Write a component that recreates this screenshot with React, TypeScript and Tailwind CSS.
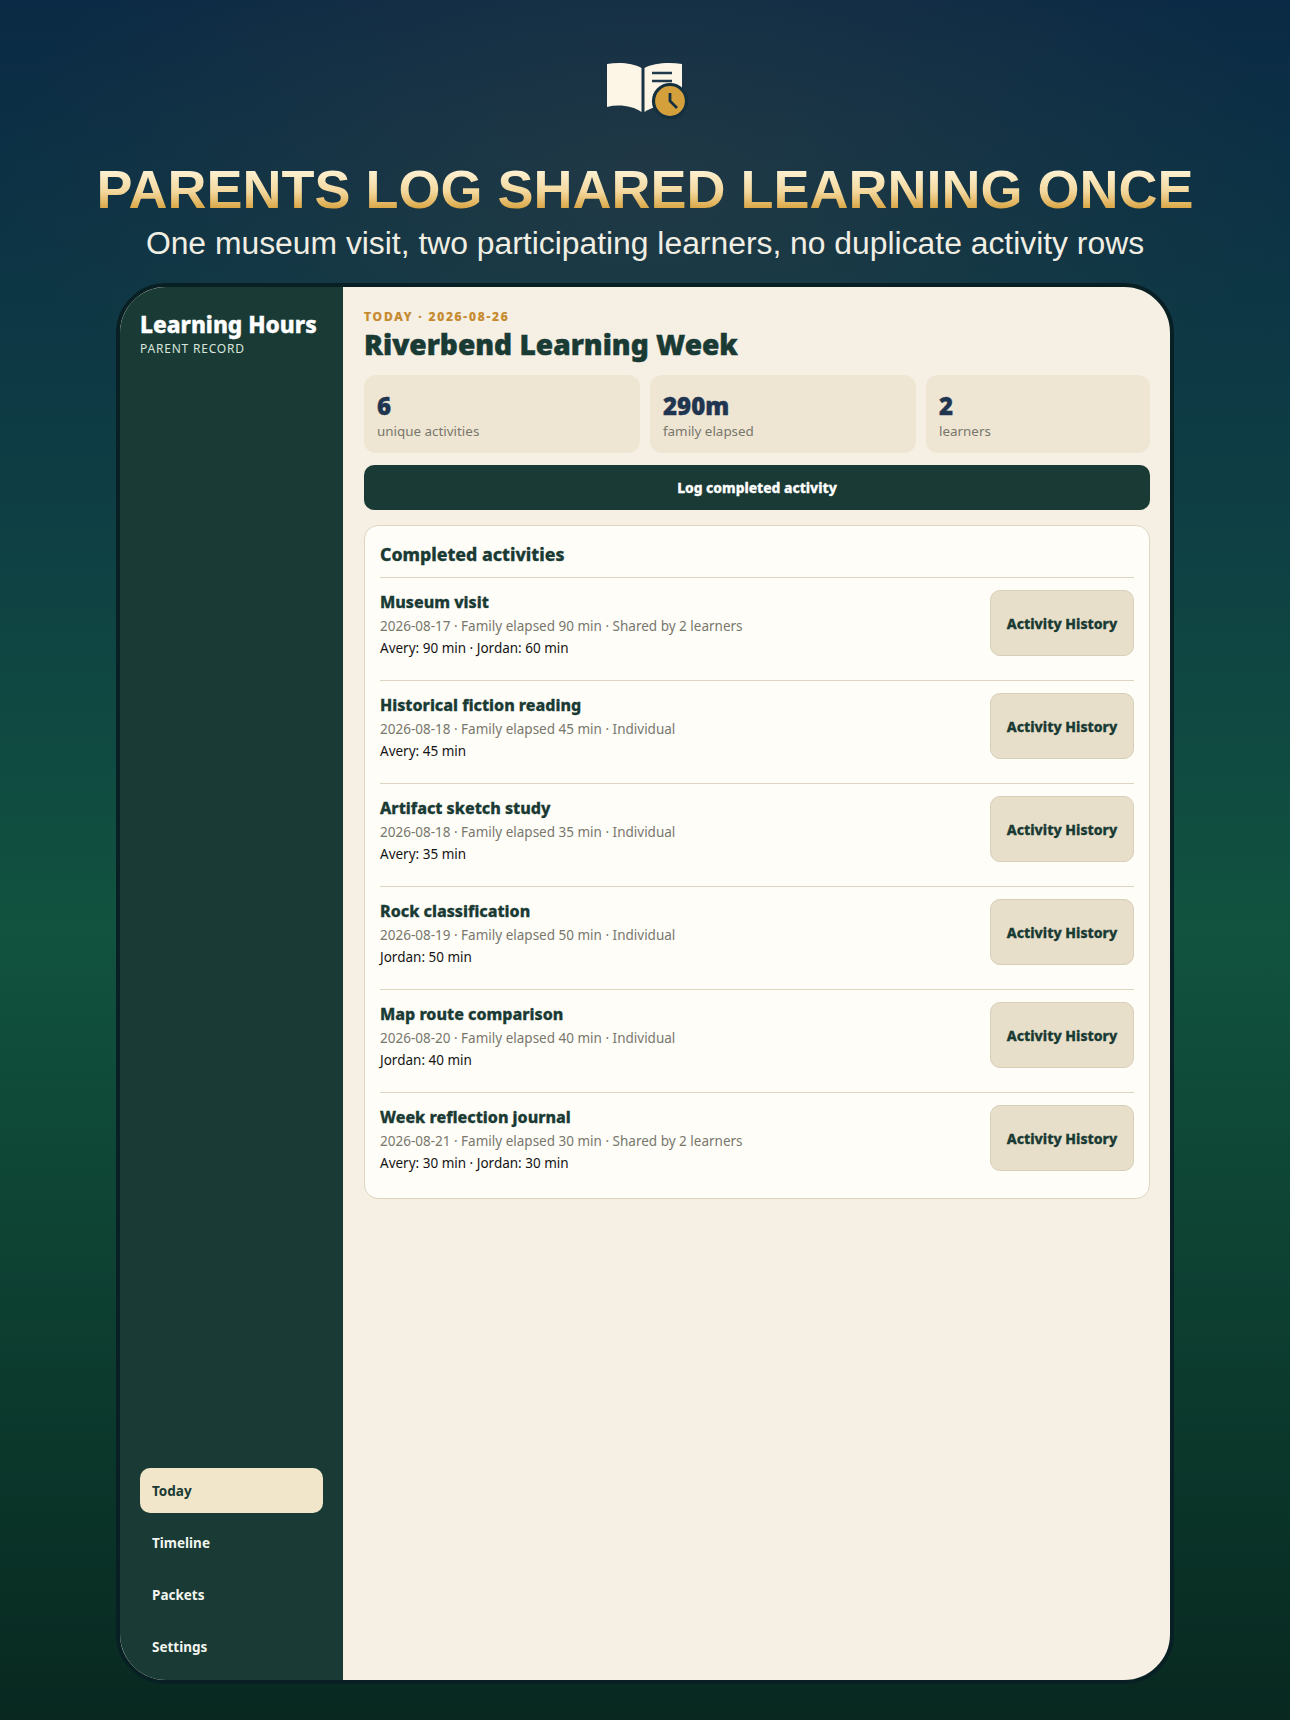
import React from 'react';

const activities = [
  { name: 'Museum visit', meta: '2026-08-17 · Family elapsed 90 min · Shared by 2 learners', who: 'Avery: 90 min · Jordan: 60 min' },
  { name: 'Historical fiction reading', meta: '2026-08-18 · Family elapsed 45 min · Individual', who: 'Avery: 45 min' },
  { name: 'Artifact sketch study', meta: '2026-08-18 · Family elapsed 35 min · Individual', who: 'Avery: 35 min' },
  { name: 'Rock classification', meta: '2026-08-19 · Family elapsed 50 min · Individual', who: 'Jordan: 50 min' },
  { name: 'Map route comparison', meta: '2026-08-20 · Family elapsed 40 min · Individual', who: 'Jordan: 40 min' },
  { name: 'Week reflection journal', meta: '2026-08-21 · Family elapsed 30 min · Shared by 2 learners', who: 'Avery: 30 min · Jordan: 30 min' },
];

const stats = [
  { value: '6', label: 'unique activities' },
  { value: '290m', label: 'family elapsed' },
  { value: '2', label: 'learners' },
];

const navItems = ['Timeline', 'Packets', 'Settings'];

const BookIcon = () => (
  <svg width="85" height="62" viewBox="0 0 85 62" className="block">
    <path d="M2 4 C14 2 28 3 36.5 8 V52 C28 46 14 44 2 47 Z" fill="#fdf5e6" />
    <path d="M39.5 8 C48 3 64 2 77 4 V47 C64 44 48 46 39.5 52 Z" fill="#fdf5e6" />
    <path d="M47 13 H67 M47 21 H67" stroke="#1f3a4a" strokeWidth="2.6" fill="none" />
    <circle cx="65" cy="41" r="16.5" fill="#d4a03c" stroke="#14303f" strokeWidth="3.2" />
    <path d="M65 33 V41 L72 48" stroke="#14303f" strokeWidth="2.8" fill="none" />
  </svg>
);

export default function App() {
  return (
    <div className="relative min-h-[1720px] w-[1290px] overflow-hidden bg-[linear-gradient(180deg,#0b2a45_0%,#0e3f44_30%,#11533f_54%,#0d3f31_76%,#082820_100%)] font-['Noto_Sans',sans-serif]">
      <div className="absolute inset-x-0 top-0 h-[700px] bg-[radial-gradient(ellipse_50%_50%_at_50%_25%,rgba(70,70,70,0.35),rgba(70,70,70,0))]" />
      <div className="relative flex flex-col items-center">
        <div className="mt-[60px] ml-[5px]">
          <BookIcon />
        </div>
        <h1 className="mt-[39px] bg-[linear-gradient(180deg,#fff3d6_15%,#f3d79c_55%,#d9a441_86%)] bg-clip-text font-['Liberation_Sans',sans-serif] text-[54px] leading-[56px] font-bold text-transparent">
          PARENTS LOG SHARED LEARNING ONCE
        </h1>
        <p className="mt-[6px] font-['Liberation_Sans',sans-serif] text-[31.85px] leading-[40px] text-[#f1eee3]">
          One museum visit, two participating learners, no duplicate activity rows
        </p>

        <div className="mt-[20px] flex h-[1401px] w-[1058px] overflow-hidden rounded-[50px] border-[4px] border-[#082024] bg-[#f6f0e4]">
          <aside className="flex w-[223px] shrink-0 flex-col justify-between bg-[#1a3b35] px-5 pt-[24px] pb-[11px]">
            <div>
              <div className="text-[22.7px] leading-[28px] font-extrabold text-white [-webkit-text-stroke:0.4px_#ffffff]">Learning Hours</div>
              <div className="mt-[2px] text-[12px] leading-[16px] tracking-[0.8px] text-[#d8e4dc]">PARENT RECORD</div>
            </div>
            <nav className="flex flex-col gap-[7px]">
              <div className="flex h-[45px] items-center rounded-[10px] bg-[#f1e6c9] px-3 pt-[2px] text-[13.5px] font-bold text-[#1a3a34]">Today</div>
              {navItems.map((item) => (
                <div key={item} className="flex h-[45px] items-center px-3 pt-[2px] text-[13.5px] font-bold text-[#f2f5ef]">{item}</div>
              ))}
            </nav>
          </aside>

          <main className="flex flex-1 flex-col pt-[22px] pr-5 pl-[21px]">
            <div className="text-[12px] leading-[16px] font-extrabold tracking-[1.8px] text-[#c68a2e] [-webkit-text-stroke:0.2px_#c68a2e]">TODAY · 2026-08-26</div>
            <h2 className="text-[28.1px] leading-[38px] font-black text-[#1a3a34] [-webkit-text-stroke:0.5px_#1a3a34]">Riverbend Learning Week</h2>
            <div className="mt-[12px] grid grid-cols-[276px_266px_224px] gap-[10px]">
              {stats.map((s) => (
                <div key={s.label} className="h-[78px] rounded-[12px] bg-[#efe5d3] px-[13px] pt-[16px]">
                  <div className="text-[24px] leading-[30px] font-black text-[#1f3550] [-webkit-text-stroke:0.4px_#1f3550]">{s.value}</div>
                  <div className="text-[13.4px] leading-[20px] text-[#77776c]">{s.label}</div>
                </div>
              ))}
            </div>
            <button className="mt-[12px] h-[45px] rounded-[10px] bg-[#1a3b35] pt-[2px] text-[13.8px] font-extrabold text-white [-webkit-text-stroke:0.3px_#ffffff]">Log completed activity</button>

            <section className="mt-[15px] rounded-[14px] border border-[#ddd5c0] bg-[#fffdf8] px-[15px] pt-[16px] pb-[15px]">
              <h3 className="h-[35px] text-[17.7px] leading-[24px] font-extrabold text-[#1a3a34] [-webkit-text-stroke:0.3px_#1a3a34]">Completed activities</h3>
              <div className="flex flex-col gap-3">
                {activities.map((a) => (
                  <div key={a.name} className="flex items-start justify-between border-t border-[#ddd5c0] py-3">
                    <div className="h-[66px]">
                      <div className="text-[16px] leading-[25px] font-extrabold text-[#1a3a34] [-webkit-text-stroke:0.3px_#1a3a34]">{a.name}</div>
                      <div className="text-[13.5px] leading-[22px] text-[#77776c]">{a.meta}</div>
                      <div className="text-[13.5px] leading-[22px] text-[#141414]">{a.who}</div>
                    </div>
                    <button className="h-[66px] w-[144px] rounded-[10px] border border-[#d8cfb8] bg-[#e7dfc9] text-[14px] font-extrabold text-[#1a3a34] [-webkit-text-stroke:0.3px_#1a3a34]">Activity History</button>
                  </div>
                ))}
              </div>
            </section>
          </main>
        </div>
      </div>
    </div>
  );
}
